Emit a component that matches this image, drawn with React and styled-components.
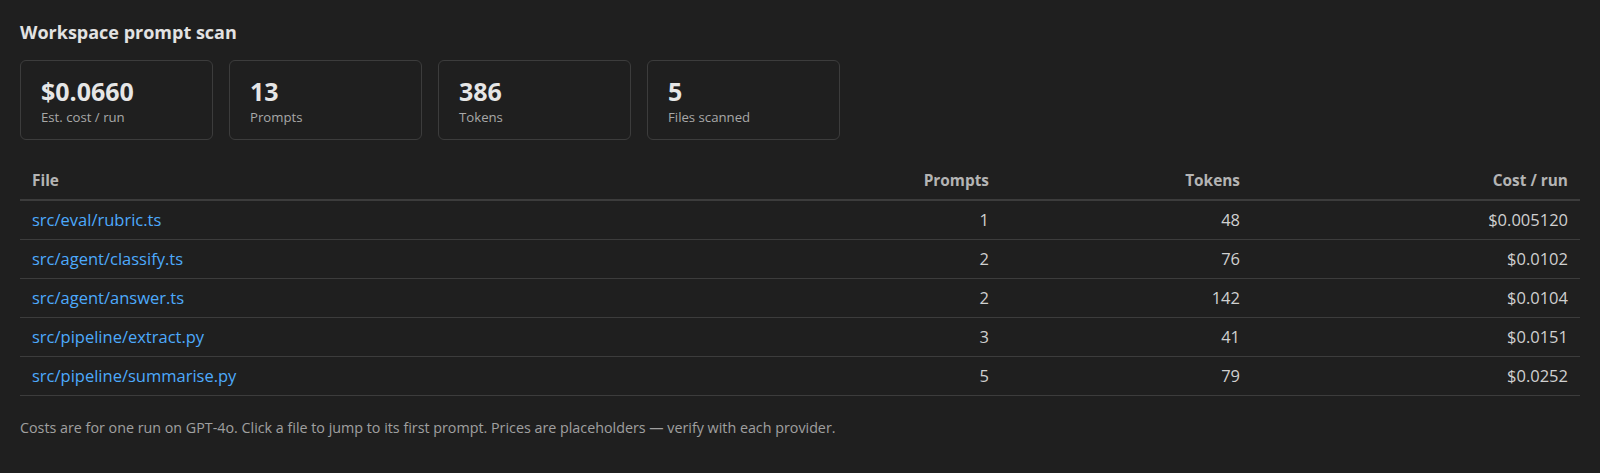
import React from "react";
import styled, { createGlobalStyle } from "styled-components";

const GlobalStyle = createGlobalStyle`
  html, body {
    margin: 0;
    padding: 0;
    background: #1f1f1f;
  }
  body {
    font-family: "Open Sans", "Noto Sans", sans-serif;
    color: #cccccc;
  }
`;

const stats = [
  { value: "$0.0660", label: "Est. cost / run" },
  { value: "13", label: "Prompts" },
  { value: "386", label: "Tokens" },
  { value: "5", label: "Files scanned" },
];

const rows = [
  { file: "src/eval/rubric.ts", prompts: 1, tokens: 48, cost: "$0.005120" },
  { file: "src/agent/classify.ts", prompts: 2, tokens: 76, cost: "$0.0102" },
  { file: "src/agent/answer.ts", prompts: 2, tokens: 142, cost: "$0.0104" },
  { file: "src/pipeline/extract.py", prompts: 3, tokens: 41, cost: "$0.0151" },
  { file: "src/pipeline/summarise.py", prompts: 5, tokens: 79, cost: "$0.0252" },
];

const App = () => {
  return (
    <>
      <GlobalStyle />
      <Page>
        <Title>Workspace prompt scan</Title>
        <Cards>
          {stats.map((s) => (
            <Card key={s.label}>
              <Value>{s.value}</Value>
              <Label>{s.label}</Label>
            </Card>
          ))}
        </Cards>
        <Table>
          <colgroup>
            <col />
            <col style={{ width: 140 }} />
            <col style={{ width: 251 }} />
            <col style={{ width: 328 }} />
          </colgroup>
          <thead>
            <tr>
              <Th>File</Th>
              <Th $num>Prompts</Th>
              <Th $num>Tokens</Th>
              <Th $num>Cost / run</Th>
            </tr>
          </thead>
          <tbody>
            {rows.map((r) => (
              <tr key={r.file}>
                <Td>
                  <FileLink href="#">{r.file}</FileLink>
                </Td>
                <Td $num>{r.prompts}</Td>
                <Td $num>{r.tokens}</Td>
                <Td $num>{r.cost}</Td>
              </tr>
            ))}
          </tbody>
        </Table>
        <Note>
          Costs are for one run on GPT-4o. Click a file to jump to its first
          prompt. Prices are placeholders — verify with each provider.
        </Note>
      </Page>
    </>
  );
};

const Page = styled.div`
  padding: 20px;
`;

const Title = styled.h2`
  margin: 0;
  font-size: 18px;
  line-height: 24px;
  font-weight: 700;
  color: #e2e2e2;
`;

const Cards = styled.div`
  display: flex;
  gap: 16px;
  margin-top: 16px;
`;

const Card = styled.div`
  box-sizing: border-box;
  width: 193px;
  height: 80px;
  display: flex;
  flex-direction: column;
  justify-content: center;
  padding: 2px 20px 0;
  border: 1px solid #3c3c3c;
  border-radius: 6px;
`;

const Value = styled.div`
  font-size: 25px;
  line-height: 30px;
  font-weight: 700;
  color: #e6e6e6;
`;

const Label = styled.div`
  margin-top: 2px;
  font-size: 13.2px;
  line-height: 18px;
  color: #a8a8a8;
`;

const Table = styled.table`
  width: 100%;
  margin-top: 23px;
  border-collapse: collapse;
  font-size: 16.5px;
`;

const Th = styled.th`
  padding: 9px 12px;
  line-height: 18px;
  font-size: 15.4px;
  text-align: ${(p) => (p.$num ? "right" : "left")};
  font-weight: 700;
  color: #b4b4b4;
  border-bottom: 2px solid #3c3c3c;
`;

const Td = styled.td`
  padding: 10px 12px;
  line-height: 18px;
  text-align: ${(p) => (p.$num ? "right" : "left")};
  color: #d0d0d0;
  border-bottom: 1px solid #3c3c3c;
`;

const FileLink = styled.a`
  color: #4daafc;
  text-decoration: none;
`;

const Note = styled.p`
  margin: 23px 0 0;
  font-size: 14.3px;
  line-height: 18px;
  color: #a0a0a0;
`;

export default App;
